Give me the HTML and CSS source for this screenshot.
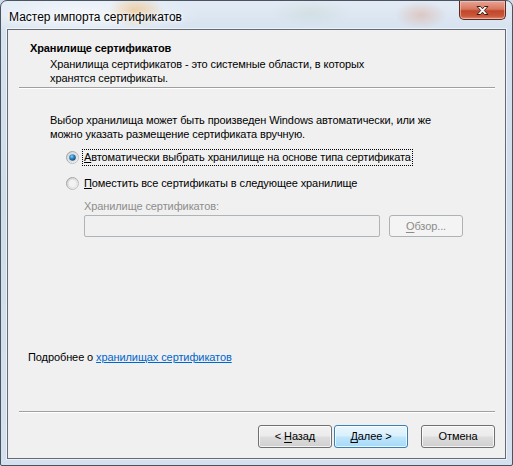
FILE: index.html
```html
<!DOCTYPE html>
<html lang="ru">
<head>
<meta charset="utf-8">
<title>Мастер импорта сертификатов</title>
<link rel="stylesheet" href="styles.css">
</head>
<body>
<div class="window">
  <div class="titlebar">
    <span class="title">Мастер импорта сертификатов</span>
    <button class="close" aria-label="Закрыть">
      <svg width="15" height="11" viewBox="0 0 15 11">
        <path d="M2 1.5 L5.5 1.5 L7.5 3.8 L9.5 1.5 L13 1.5 L9.3 5.5 L13 9.5 L9.5 9.5 L7.5 7.2 L5.5 9.5 L2 9.5 L5.7 5.5 Z" fill="#fff" stroke="#3b1b16" stroke-width="1" stroke-linejoin="round"/>
      </svg>
    </button>
  </div>

  <div class="client">
    <div class="header">
      <div class="header-title">Хранилище сертификатов</div>
      <div class="header-desc">Хранилища сертификатов - это системные области, в которых<br>хранятся сертификаты.</div>
    </div>
    <div class="etched"></div>

    <div class="body">
      <p class="intro">Выбор хранилища может быть произведен Windows автоматически, или же<br>можно указать размещение сертификата вручную.</p>

      <label class="radio-row">
        <span class="radio checked">
          <svg width="13" height="13" viewBox="0 0 13 13">
            <defs>
              <linearGradient id="ring" x1="0" y1="0" x2="1" y2="1">
                <stop offset="0" stop-color="#9a9a9a"/>
                <stop offset="1" stop-color="#c8c8c8"/>
              </linearGradient>
              <linearGradient id="well" x1="0" y1="0" x2="1" y2="1">
                <stop offset="0" stop-color="#cdcdcd"/>
                <stop offset="1" stop-color="#fafafa"/>
              </linearGradient>
              <radialGradient id="dot" cx="0.4" cy="0.35" r="0.7">
                <stop offset="0" stop-color="#8fd2f7"/>
                <stop offset="0.45" stop-color="#2b86c4"/>
                <stop offset="1" stop-color="#14426e"/>
              </radialGradient>
            </defs>
            <circle cx="6.5" cy="6.5" r="6" fill="url(#well)" stroke="url(#ring)" stroke-width="1"/>
            <circle cx="6.5" cy="6.5" r="4.3" fill="#f4f4f4" stroke="#d6d6d6" stroke-width="0.6"/>
            <circle cx="6.5" cy="6.5" r="3.3" fill="url(#dot)"/>
          </svg>
        </span>
        <span class="radio-label focused"><u>А</u>втоматически выбрать хранилище на основе типа сертификата</span>
      </label>

      <label class="radio-row">
        <span class="radio">
          <svg width="13" height="13" viewBox="0 0 13 13">
            <circle cx="6.5" cy="6.5" r="6" fill="url(#well)" stroke="url(#ring)" stroke-width="1"/>
            <circle cx="6.5" cy="6.5" r="4.3" fill="#f2f2f2" stroke="#d6d6d6" stroke-width="0.6"/>
          </svg>
        </span>
        <span class="radio-label"><u>П</u>оместить все сертификаты в следующее хранилище</span>
      </label>

      <div class="store">
        <div class="store-caption">Хранилище сертификатов:</div>
        <div class="store-row">
          <div class="textbox"></div>
          <button class="btn btn-disabled"><u>О</u>бзор...</button>
        </div>
      </div>
    </div>

    <div class="more">Подробнее о <a href="#" class="link">хранилищах сертификатов</a></div>
    <div class="etched etched-bottom"></div>

    <div class="buttons">
      <button class="btn">&lt; <u>Н</u>азад</button>
      <button class="btn btn-default"><u>Д</u>алее &gt;</button>
      <button class="btn btn-cancel">Отмена</button>
    </div>
  </div>
</div>
</body>
</html>
```

FILE: styles.css
```css
* {
  box-sizing: border-box;
}

html, body {
  margin: 0;
  padding: 0;
  background: #cfdbe8;
}

body {
  font-family: "Liberation Sans", "Noto Sans", sans-serif;
  font-size: 11px;
  letter-spacing: -0.1px;
  color: #000;
}

/* Aero glass frame */
.window {
  width: 513px;
  height: 466px;
  border: 1px solid #4a5360;
  border-radius: 7px 7px 2px 2px;
  padding: 0 6px 6px 6px;
  display: flex;
  flex-direction: column;
  background:
    radial-gradient(ellipse 28px 16px at 135px 10px, rgba(240, 170, 80, 0.5), rgba(240, 170, 80, 0) 100%),
    radial-gradient(ellipse 40px 14px at 310px 12px, rgba(180, 200, 180, 0.25), rgba(180, 200, 180, 0) 100%),
    radial-gradient(ellipse 26px 14px at 420px 14px, rgba(220, 140, 110, 0.35), rgba(220, 140, 110, 0) 100%),
    radial-gradient(ellipse 120px 22px at 80px 14px, rgba(255, 255, 255, 0.7), rgba(255, 255, 255, 0) 100%),
    linear-gradient(180deg, #e2ebf5 0px, #d6e2ef 30px, #cfdcea 200px, #d5e1ee 466px);
}

.titlebar {
  height: 28px;
  display: flex;
  align-items: flex-start;
}

.title {
  padding: 9px 0 0 2px;
  font-size: 12px;
  letter-spacing: 0;
  line-height: 15px;
  color: #000;
  text-shadow: 0 0 6px #fff, 0 0 3px #fff;
}

.close {
  margin-left: auto;
  width: 47px;
  height: 19px;
  padding: 0;
  border: 1px solid #5a2a22;
  border-top: none;
  border-radius: 0 0 5px 5px;
  background: linear-gradient(180deg, #e8a493 0%, #d7775f 45%, #c2452b 55%, #c95a3c 85%, #e0907a 100%);
  box-shadow: inset 0 0 0 1px rgba(255, 210, 195, 0.55);
  display: flex;
  align-items: center;
  justify-content: center;
}

.close svg {
  display: block;
}

/* Dialog client area */
.client {
  flex: 1;
  border: 1px solid #646b76;
  background: #f0f0f0;
  display: flex;
  flex-direction: column;
  box-shadow: 0 0 0 1px rgba(255, 255, 255, 0.55);
}

.header {
  padding: 11px 0 0 22px;
}

.header-title {
  font-weight: bold;
  line-height: 15px;
}

.header-desc {
  margin: 1px 0 0 20px;
  line-height: 14px;
}

.etched {
  margin: 2px 10px 0 11px;
  border-top: 1px solid #a0a0a0;
  border-bottom: 1px solid #ffffff;
}

.body {
  flex: 1;
  padding: 0 0 0 42px;
}

.intro {
  margin: 24px 0 0 0;
  line-height: 14px;
}

.radio-row {
  display: flex;
  align-items: center;
  height: 17px;
  margin: 8px 0 0 16px;
}

.radio-row + .radio-row {
  margin-top: 9px;
}

.radio {
  width: 13px;
  height: 13px;
  display: block;
}

.radio svg {
  display: block;
}

.radio-label {
  margin-left: 3px;
  line-height: 15px;
  padding: 0 1px;
  border: 1px dotted transparent;
}

.radio-label.focused {
  border-color: #000;
}

.store {
  margin: 7px 0 0 34px;
}

.store-caption {
  color: #8d8d8d;
  line-height: 15px;
}

.store-row {
  display: flex;
  gap: 9px;
  margin-top: 1px;
}

.textbox {
  width: 296px;
  height: 22px;
  border: 1px solid #afb4b9;
  border-radius: 2px;
  background: #f0f0f0;
}

.btn {
  width: 74px;
  height: 23px;
  padding: 0;
  font: inherit;
  letter-spacing: inherit;
  color: #000;
  border: 1px solid #707070;
  border-radius: 3px;
  background: linear-gradient(180deg, #f2f2f2 0%, #ebebeb 48%, #dddddd 52%, #cfcfcf 100%);
  box-shadow: inset 0 0 0 1px rgba(255, 255, 255, 0.75);
  line-height: 19px;
}

.btn u {
  text-underline-offset: 2px;
}

.btn-disabled {
  height: 22px;
  line-height: 18px;
  color: #8b8b8b;
  border-color: #adb2b5;
  background: #f4f4f4;
  box-shadow: none;
}

.btn-default {
  border-color: #3c7fb1;
  background: linear-gradient(180deg, #eaf6fd 0%, #d9f0fc 48%, #bee6fd 52%, #a7d9f5 100%);
}

.more {
  margin: 0 0 0 20px;
  line-height: 15px;
}

.link {
  color: #0066cc;
  text-decoration: underline;
}

.etched-bottom {
  margin-top: 46px;
}

.buttons {
  display: flex;
  justify-content: flex-end;
  gap: 2px;
  padding: 12px 10px 10px 0;
}

.btn-cancel {
  margin-left: 11px;
}
```
